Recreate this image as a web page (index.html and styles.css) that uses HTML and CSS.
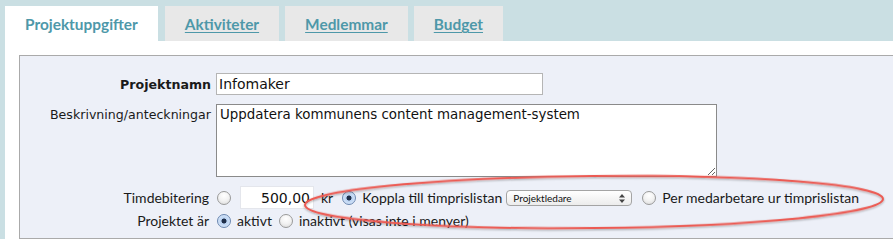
FILE: index.html
```html
<!DOCTYPE html>
<html lang="sv">
<head>
    <meta charset="UTF-8">
    <meta name="viewport" content="width=device-width, initial-scale=1.0">
    <title>Projektuppgifter</title>
    <link rel="stylesheet" href="styles.css">
</head>
<body>
    <div class="tabs">
        <a class="tab active">Projektuppgifter</a>
        <a class="tab" href="#">Aktiviteter</a>
        <a class="tab" href="#">Medlemmar</a>
        <a class="tab" href="#">Budget</a>
    </div>

    <div class="content">
        <form class="project-form">
            <div class="row row-name">
                <label class="label bold" for="name">Projektnamn</label>
                <input type="text" id="name" class="text-input" value="Infomaker">
            </div>
            <div class="row row-desc">
                <label class="label" for="desc">Beskrivning/anteckningar</label>
                <textarea id="desc">Uppdatera kommunens content management-system</textarea>
            </div>
            <div class="row row-rate">
                <span class="label">Timdebitering</span>
                <input type="radio" name="rate" class="radio">
                <input type="text" class="amount" value="500,00">
                <span class="opt">kr</span>
                <input type="radio" name="rate" class="radio" checked>
                <span class="opt">Koppla till timprislistan</span>
                <span class="select-wrap">
                    <select class="small-select">
                        <option>Projektledare</option>
                    </select>
                    <svg class="select-arrows" width="6" height="9" viewBox="0 0 6 9">
                        <path d="M3 0 L6 3.5 L0 3.5 Z M3 9 L6 5.5 L0 5.5 Z" fill="#444"/>
                    </svg>
                </span>
                <input type="radio" name="rate" class="radio">
                <span class="opt">Per medarbetare ur timprislistan</span>
            </div>
            <div class="row row-state">
                <span class="label">Projektet är</span>
                <input type="radio" name="state" class="radio" checked>
                <span class="opt">aktivt</span>
                <input type="radio" name="state" class="radio">
                <span class="opt">inaktivt (visas inte i menyer)</span>
            </div>
        </form>
    </div>

    <!-- markering runt timdebiteringen -->
    <svg class="highlight" width="893" height="239" viewBox="0 0 893 239">
        <defs>
            <filter id="shade" x="-5%" y="-20%" width="110%" height="140%">
                <feDropShadow dx="0" dy="1" stdDeviation="1" flood-color="#000" flood-opacity="0.35"/>
            </filter>
        </defs>
        <ellipse cx="594" cy="202" rx="289" ry="26" transform="rotate(-0.6 594 202)"
                 fill="none" stroke="#ec5a52" stroke-width="2" filter="url(#shade)"/>
    </svg>
</body>
</html>
```

FILE: styles.css
```css
body {
    margin: 0;
    background-color: #cadfe3;
    font-family: "DejaVu Sans", Arial, sans-serif;
    font-size: 12.6px;
    color: #1a1a1a;
    height: 239px;
    overflow: hidden;
    position: relative;
}
.tabs {
    display: flex;
    padding: 6px 0 0 5px;
    gap: 6px;
}
.tab {
    display: block;
    height: 35px;
    line-height: 36px;
    padding: 0 20px;
    background-color: #e8e8e8;
    font-family: Lato, "Open Sans", sans-serif;
    font-weight: bold;
    font-size: 15.4px;
    color: #4e98a9;
    text-decoration: underline;
    text-underline-offset: 2px;
}
.tab.active {
    background-color: white;
    text-decoration: none;
    margin-right: 1px;
}
.content {
    background-color: white;
    margin-left: 5px;
    padding: 14px 0 0 14px;
    height: 184px;
}
.project-form {
    background-color: #edf0f8;
    border: 1px solid #aaa;
    border-right: none;
    height: 184px;
    box-sizing: border-box;
    padding-top: 17px;
}
.row {
    display: flex;
    align-items: center;
}
.label {
    width: 191px;
    margin-right: 5px;
    text-align: right;
    flex-shrink: 0;
}
.bold {
    font-weight: bold;
}
.text-input {
    width: 327px;
    height: 22px;
    box-sizing: border-box;
    border: 1px solid #b5b5b5;
    padding: 0 2px;
    font-family: "DejaVu Sans", sans-serif;
    font-size: 14px;
    color: #111;
    background: white;
}
.row-desc {
    align-items: flex-start;
    margin-top: 9px;
}
.row-desc .label {
    padding-top: 3px;
}
textarea {
    width: 501px;
    height: 73px;
    box-sizing: border-box;
    border: 1px solid #8a8a8a;
    padding: 2px 3px;
    font-family: "DejaVu Sans", sans-serif;
    font-size: 13.4px;
    color: #111;
    margin: 0;
}
.row-rate {
    margin-top: 9px;
    font-family: Lato, sans-serif;
    font-size: 14px;
}
.row-rate .label,
.row-state .label {
    width: 189px;
    margin-right: 7px;
}
.row-state {
    margin-top: 3px;
    font-family: Lato, sans-serif;
    font-size: 14px;
}
.radio {
    appearance: none;
    -webkit-appearance: none;
    width: 14px;
    height: 14px;
    margin: 0 6px 0 1px;
    border: 1px solid #9a9a9a;
    border-radius: 50%;
    box-sizing: border-box;
    background: radial-gradient(circle at 50% 30%, #ffffff 0%, #f2f2f2 50%, #d8d8d8 100%);
    flex-shrink: 0;
}
.radio:checked {
    border-color: #6a87b0;
    background: radial-gradient(circle, #1f2f4a 0, #1f2f4a 2.2px, #b9d2f2 2.8px, #e6f0fc 100%);
}
.amount {
    width: 74px;
    height: 23px;
    box-sizing: border-box;
    border: 1px solid #e4e6ec;
    text-align: right;
    padding: 0 3px 0 0;
    margin-left: 3px;
    font-family: "DejaVu Sans", sans-serif;
    font-size: 14px;
    color: #111;
    background: white;
}
.opt {
    margin-right: 6px;
}
.amount + .opt {
    margin-left: 7px;
    margin-right: 8px;
}
.select-wrap {
    position: relative;
    display: inline-block;
    margin: 0 9px 0 -2px;
}
.small-select {
    appearance: none;
    -webkit-appearance: none;
    width: 126px;
    height: 16px;
    border: 1px solid #a4a4a4;
    border-radius: 4px;
    background: linear-gradient(#ffffff, #ececec);
    font-family: Lato, sans-serif;
    font-size: 10px;
    padding: 0 0 0 6px;
    color: #111;
    display: block;
}
.select-arrows {
    position: absolute;
    right: 7px;
    top: 4px;
}
.highlight {
    position: absolute;
    top: 0;
    left: 0;
    pointer-events: none;
}
```
